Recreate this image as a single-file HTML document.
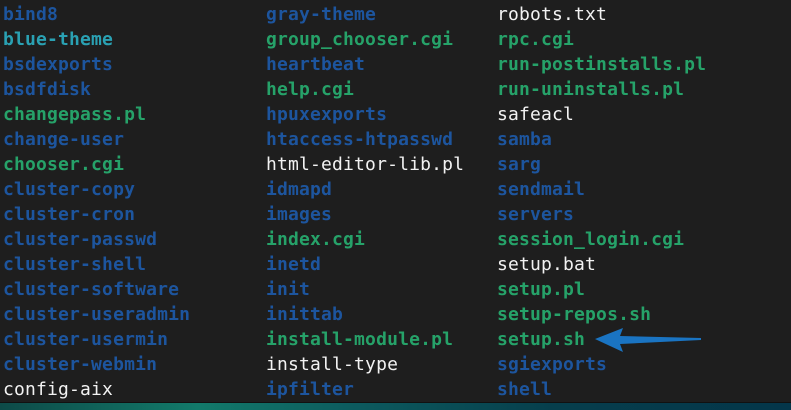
<!DOCTYPE html>
<html><head><style>
html,body{margin:0;padding:0;width:791px;height:409px;overflow:hidden;background:#1e1e1e}
.t{position:absolute;top:0;left:0;width:791px;height:402px;background:#1e1e1e}
.c{position:absolute;top:2px;font-family:"DejaVu Sans Mono","Liberation Mono",monospace;font-size:18px;line-height:25px;white-space:pre;letter-spacing:0.17px}
.b{color:#1d559e;font-weight:bold}.y{color:#2aa1b3;font-weight:bold}.g{color:#26a269;font-weight:bold}.w{color:#f2f2f2}
.bar{position:absolute;top:402px;left:0;width:791px;height:7px;background:linear-gradient(90deg,#0d4a48 0%,#127a6a 25%,#0c5a5e 45%,#063e4c 70%,#04364a 100%);border-top:1px solid #111}
</style></head><body>
<div class="t">
<div class="c" style="left:3px"><span class="b">bind8</span>
<span class="y">blue-theme</span>
<span class="b">bsdexports</span>
<span class="b">bsdfdisk</span>
<span class="g">changepass.pl</span>
<span class="b">change-user</span>
<span class="g">chooser.cgi</span>
<span class="b">cluster-copy</span>
<span class="b">cluster-cron</span>
<span class="b">cluster-passwd</span>
<span class="b">cluster-shell</span>
<span class="b">cluster-software</span>
<span class="b">cluster-useradmin</span>
<span class="b">cluster-usermin</span>
<span class="b">cluster-webmin</span>
<span class="w">config-aix</span></div>
<div class="c" style="left:266px"><span class="b">gray-theme</span>
<span class="g">group_chooser.cgi</span>
<span class="b">heartbeat</span>
<span class="g">help.cgi</span>
<span class="b">hpuxexports</span>
<span class="b">htaccess-htpasswd</span>
<span class="w">html-editor-lib.pl</span>
<span class="b">idmapd</span>
<span class="b">images</span>
<span class="g">index.cgi</span>
<span class="b">inetd</span>
<span class="b">init</span>
<span class="b">inittab</span>
<span class="g">install-module.pl</span>
<span class="w">install-type</span>
<span class="b">ipfilter</span></div>
<div class="c" style="left:497px"><span class="w">robots.txt</span>
<span class="g">rpc.cgi</span>
<span class="g">run-postinstalls.pl</span>
<span class="g">run-uninstalls.pl</span>
<span class="w">safeacl</span>
<span class="b">samba</span>
<span class="b">sarg</span>
<span class="b">sendmail</span>
<span class="b">servers</span>
<span class="g">session_login.cgi</span>
<span class="w">setup.bat</span>
<span class="g">setup.pl</span>
<span class="g">setup-repos.sh</span>
<span class="g">setup.sh</span>
<span class="b">sgiexports</span>
<span class="b">shell</span></div>
<svg style="position:absolute;left:590px;top:325px" width="120" height="30" viewBox="0 0 120 30">
<path d="M5 14 L33 3 L30 11 L111 13 L111 15 L30 19 L33 27 Z" fill="#1a74c2"/>
</svg>
</div>
<div class="bar"></div>
</body></html>
